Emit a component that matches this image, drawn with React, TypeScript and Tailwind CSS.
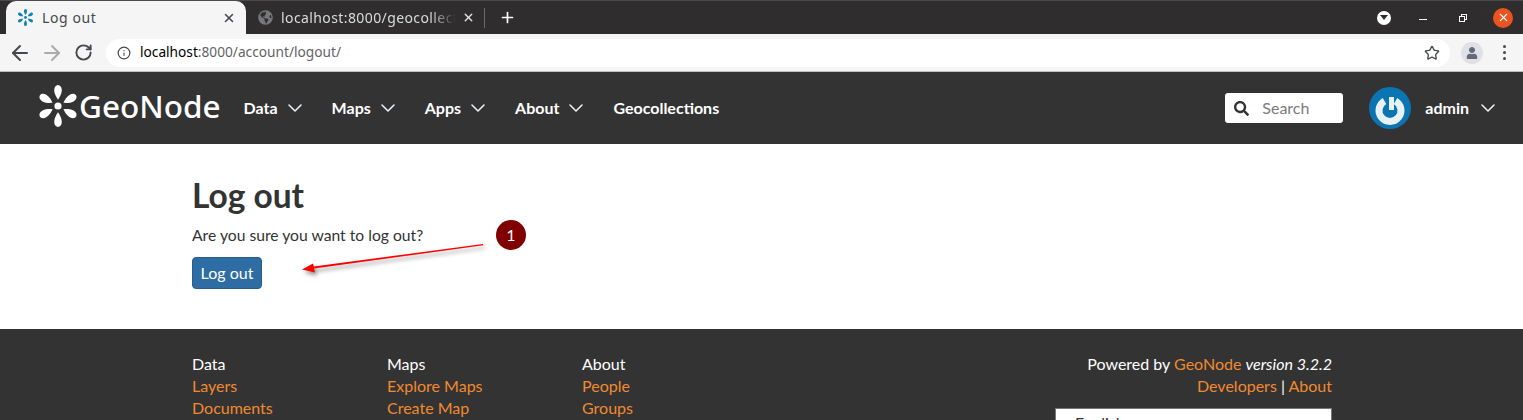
import { ChevronDown, X, Plus, ArrowLeft, ArrowRight, RotateCw, Info, Star } from "lucide-react";
import { FaGlobeAmericas, FaSearch, FaUser } from "react-icons/fa";

function Logo({ size, color, className }: { size: number; color: string; className?: string }) {
  const angles = [0, 60, 120, 180, 240, 300];
  return (
    <svg width={size} height={size} viewBox="0 0 40 40" className={`shrink-0 ${className ?? ""}`}>
      <circle cx="20" cy="20" r="3.4" fill={color} />
      {angles.map((a) => (
        <path
          key={a}
          d="M20 14 C18.6 12 16.4 8.5 16.4 5 C16.4 2 18 0 20 0 C22 0 23.6 2 23.6 5 C23.6 8.5 21.4 12 20 14 Z"
          fill={color}
          transform={`rotate(${a} 20 20)`}
        />
      ))}
    </svg>
  );
}

function NavItem({ label }: { label: string }) {
  return (
    <div className="flex items-center gap-[5px] text-[16px] font-bold text-white">
      <span>{label}</span>
      <ChevronDown size={24} strokeWidth={1.6} className="text-[#e8eef2]" />
    </div>
  );
}

function FooterCol({ title, links }: { title: string; links: string[] }) {
  return (
    <div className="w-[195px] text-[16px] leading-[22px]">
      <div className="text-white">{title}</div>
      {links.map((l) => (
        <div key={l} className="text-[#f08a30]">{l}</div>
      ))}
    </div>
  );
}

export default function App() {
  return (
    <div className="relative h-[420px] w-[1523px] overflow-hidden bg-white font-['Lato',sans-serif]">
      {/* Tab strip */}
      <div className="flex h-[34px] items-end border-t border-t-[#4a4a4a] bg-[#2f2d2e] font-['Noto_Sans',sans-serif]">
        <div className="ml-[6px] flex h-[33px] w-[240px] items-center rounded-t-[10px] bg-[#f5f5f5] pl-[11px] pr-[10px]">
          <Logo size={17} color="#1583b4" />
          <span className="ml-[8px] flex-1 text-[14px] tracking-[0.6px] text-[#45484c]">Log out</span>
          <X size={14} strokeWidth={2.6} className="text-[#45484c]" />
        </div>
        <div className="flex h-[33px] w-[239px] items-center pl-[12px] pr-[0px]">
          <FaGlobeAmericas size={15} className="text-[#77787a]" />
          <span className="ml-[8px] w-[175px] overflow-hidden whitespace-nowrap text-[14px] tracking-[0.4px] text-[#dadbdc] [mask-image:linear-gradient(to_right,black_85%,transparent)]">localhost:8000/geocollections</span>
          <X size={13} strokeWidth={2.6} className="ml-auto text-[#e4e4e4]" />
          <div className="ml-[9px] h-[20px] w-px bg-[#6a6a6a]" />
        </div>
        <div className="flex h-[33px] items-center pl-[14px]">
          <Plus size={17} strokeWidth={2.4} className="text-white" />
        </div>
        <div className="ml-auto flex h-[33px] items-center pr-[10px]">
          <div className="flex h-[14px] w-[14px] items-center justify-center rounded-full bg-white">
            <div className="h-0 w-0 border-x-[4px] border-t-[5px] border-x-transparent border-t-[#2f2d2e]" />
          </div>
          <div className="ml-[28px] mt-[4px] h-px w-[8px] bg-white" />
          <div className="relative ml-[32px] h-[8px] w-[8px]">
            <div className="absolute right-0 top-0 h-[6px] w-[6px] border border-white" />
            <div className="absolute bottom-0 left-0 h-[6px] w-[6px] border border-white bg-[#2f2d2e]" />
          </div>
          <div className="ml-[26px] flex h-[20px] w-[20px] items-center justify-center rounded-full bg-[#e95420]">
            <X size={13} strokeWidth={2} className="text-white" />
          </div>
        </div>
      </div>
      {/* Toolbar */}
      <div className="flex h-[38px] items-center border-b border-b-[#bdbdbd] bg-[#f5f5f5] pl-[8px] pr-[10px]">
        <ArrowLeft size={24} strokeWidth={2} className="text-[#45484c]" />
        <ArrowRight size={24} strokeWidth={2} className="ml-[8px] text-[#a9abad]" />
        <RotateCw size={19} strokeWidth={2.4} className="ml-[10px] text-[#45484c]" />
        <div className="ml-[13px] flex h-[28px] w-[1344px] items-center rounded-full bg-white pl-[11px] pr-[10px] font-['Noto_Sans',sans-serif]">
          <Info size={14} strokeWidth={2} className="text-[#45484c]" />
          <span className="ml-[9px] text-[13.7px] text-black">localhost</span>
          <span className="text-[13.7px] text-[#5f6368]">:8000/account/logout/</span>
          <Star size={16} strokeWidth={2} className="ml-auto text-[#45484c]" />
        </div>
        <div className="ml-[11px] flex h-[22px] w-[22px] items-center justify-center rounded-full bg-[#dfe1e5]">
          <FaUser size={12} className="text-[#5f6b7a]" />
        </div>
        <div className="ml-[20px] flex flex-col gap-[3px]">
          <div className="h-[3px] w-[3px] rounded-full bg-[#45484c]" />
          <div className="h-[3px] w-[3px] rounded-full bg-[#45484c]" />
          <div className="h-[3px] w-[3px] rounded-full bg-[#45484c]" />
        </div>
      </div>
      {/* Navbar */}
      <div className="flex h-[72px] items-center bg-[#333333] pl-[37px] pr-[23px]">
        <Logo size={42} color="#ffffff" className="mb-[5px]" />
        <span className="mb-[4px] font-['Noto_Sans',sans-serif] text-[31.5px] font-medium leading-none text-white">GeoNode</span>
        <div className="ml-[23px] flex items-center gap-[25px]">
          <NavItem label="Data" />
          <NavItem label="Maps" />
          <NavItem label="Apps" />
          <NavItem label="About" />
          <span className="text-[16px] font-bold text-white">Geocollections</span>
        </div>
        <div className="ml-auto flex h-[30px] w-[118px] items-center rounded-[3px] bg-white pl-[9px]">
          <FaSearch size={15} className="text-[#333333]" />
          <span className="ml-[13px] text-[16px] text-[#7b7b7b]">Search</span>
        </div>
        <svg width="42" height="42" viewBox="0 0 42 42" className="ml-[26px] shrink-0">
          <circle cx="21" cy="21" r="21" fill="#0b74b3" />
          <path d="M15.5 14 A11 11 0 1 0 26.5 14" fill="none" stroke="#e8f1f6" strokeWidth="7" />
          <rect x="20" y="10" width="5" height="13" fill="#e8f1f6" />
          <rect x="18" y="10" width="2" height="12" fill="#0b74b3" />
        </svg>
        <span className="ml-[14px] text-[16px] font-bold text-white">admin</span>
        <ChevronDown size={24} strokeWidth={1.6} className="ml-[7px] text-[#e8eef2]" />
      </div>
      {/* Content */}
      <div className="h-[185px] pl-[192px] text-[#333333]">
        <h1 className="pt-[31px] text-[33.5px] font-bold leading-[40px]">Log out</h1>
        <p className="mt-[9px] text-[15.7px] leading-[22px]">Are you sure you want to log out?</p>
        <button className="mt-[11px] h-[32px] w-[70px] rounded-[4px] border border-[#285e8e] bg-[#2e6da4] text-[16px] text-white">Log out</button>
      </div>
      {/* Footer */}
      <div className="h-[91px] bg-[#333333] pl-[192px] pr-[191px] pt-[24px]">
        <div className="flex">
          <FooterCol title="Data" links={["Layers", "Documents"]} />
          <FooterCol title="Maps" links={["Explore Maps", "Create Map"]} />
          <FooterCol title="About" links={["People", "Groups"]} />
          <div className="ml-auto flex w-[277px] flex-col items-end text-[16px] leading-[22px] text-white">
            <div className="whitespace-nowrap">Powered by <span className="text-[#f08a30]">GeoNode</span> <em>version 3.2.2</em></div>
            <div><span className="text-[#f08a30]">Developers</span> | <span className="text-[#f08a30]">About</span></div>
            <div className="mt-[11px] h-[30px] w-full border border-[#777777] bg-white pl-[19px] pt-[3px] text-[#333333]">English</div>
          </div>
        </div>
      </div>
      {/* Annotation */}
      <svg className="absolute left-[295px] top-[235px] drop-shadow-[2px_3px_2px_rgba(0,0,0,0.45)]" width="200" height="50" viewBox="0 0 200 50">
        <polygon points="188,9 188.3,10.2 19,33.6 20,37.5 7,34.5 18,28.5 18.8,31.6" fill="#ff0000" />
      </svg>
      <div className="absolute left-[496px] top-[220px] flex h-[30px] w-[30px] items-center justify-center rounded-full bg-[#800000] text-[16px] text-white">1</div>
    </div>
  );
}
